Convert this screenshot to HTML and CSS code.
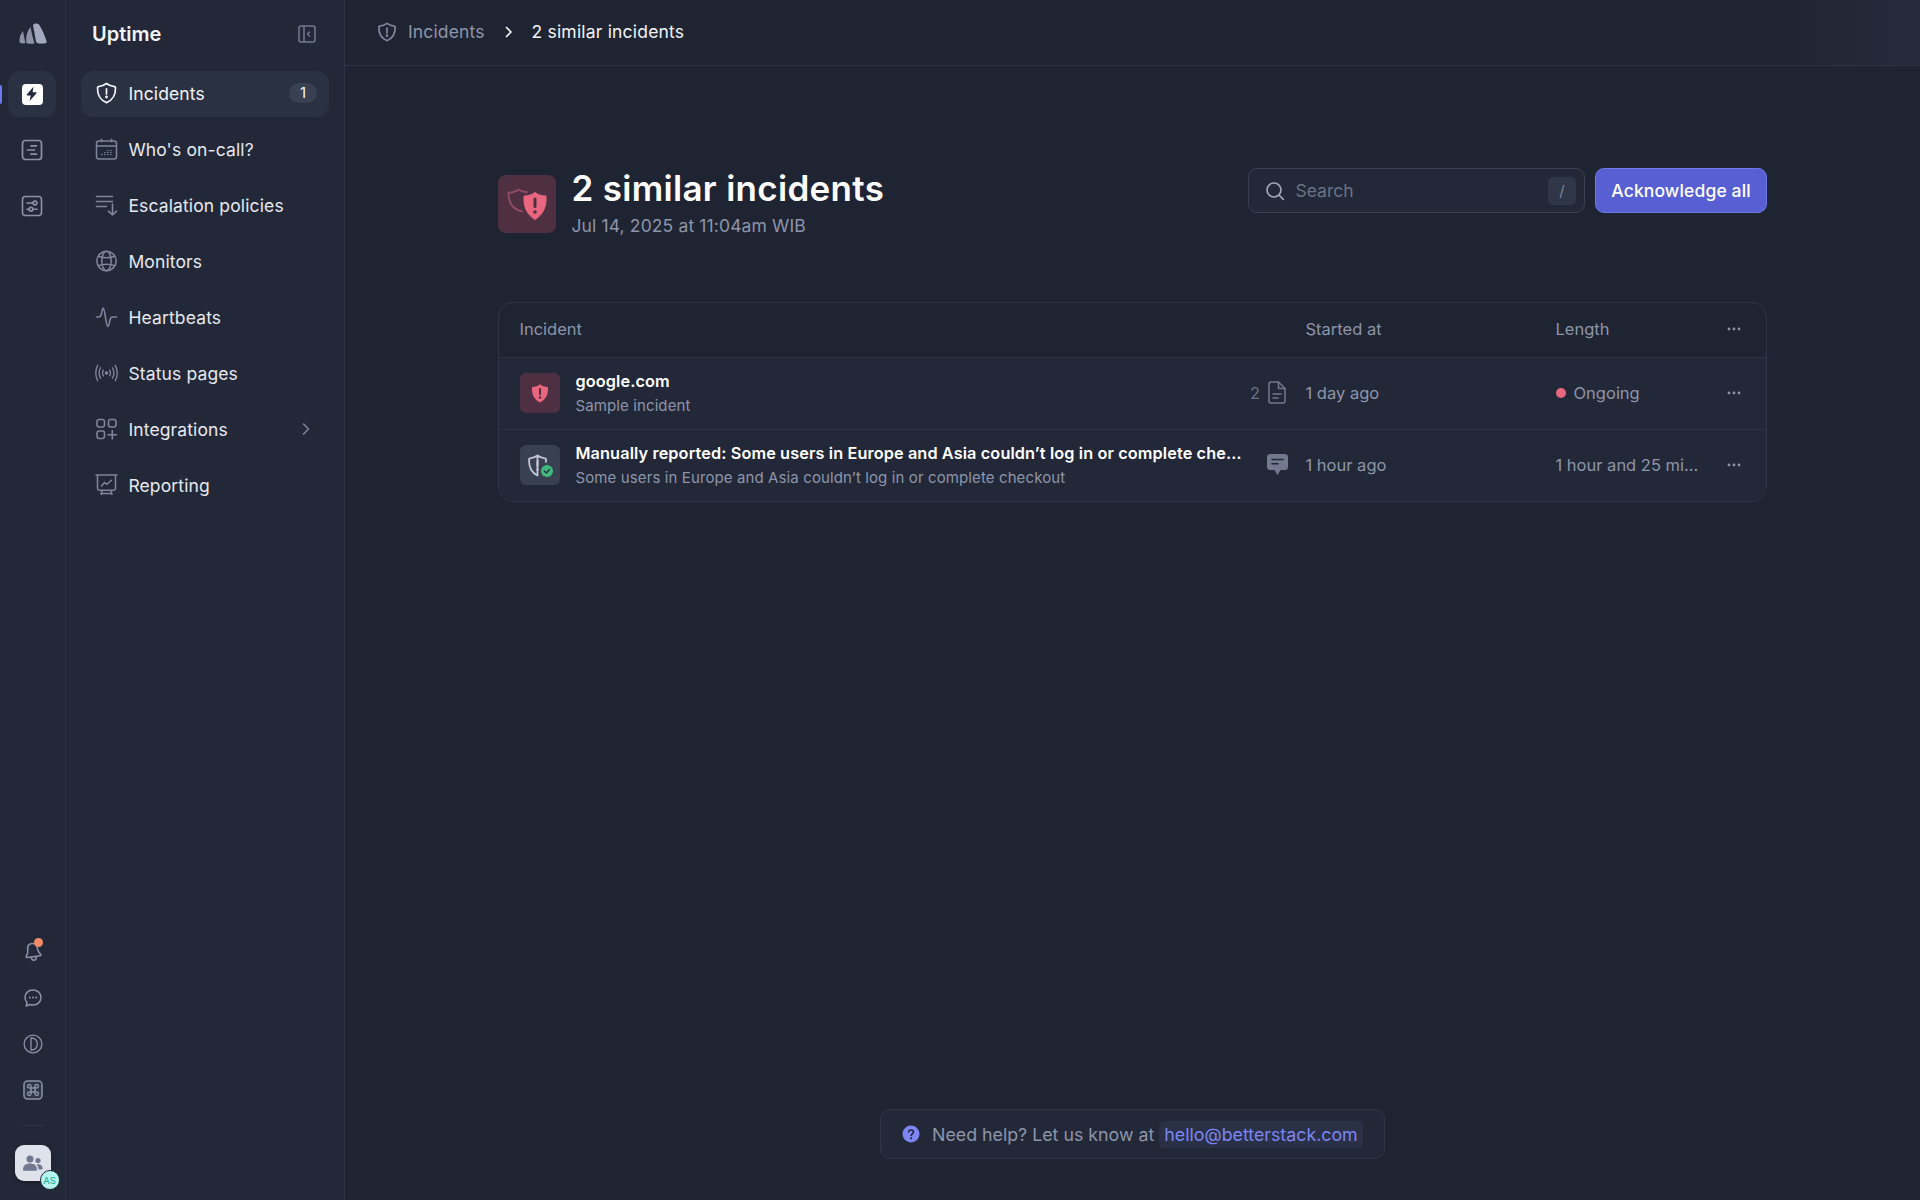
FILE: index.html
```html
<!DOCTYPE html>
<html lang="en">
<head>
<meta charset="utf-8">
<title>2 similar incidents</title>
<link rel="stylesheet" href="styles.css">
</head>
<body>
<div class="app">
  <nav class="rail">
    <div class="rail-logo">
      <svg width="28" height="21" viewBox="0 0 28 21"><path d="M.5 19C0 15 1.500 11 4 8c.5 4 1.500 8 2.500 12-2 .5-5 .8-6-1z" fill="#8b92a8"/><path d="M7.500 20c-1-6 .5-11.500 4-16 1 5.500 2.300 11 4 16.500-2.500.5-6.500.5-8-.5z" fill="#8b92a8"/><path d="M14 2c1.500-1.700 4.500-2 6-.5 3 4.500 6 11.500 7.500 16.500.5 1.500-.5 2.500-2 2.500H20c-1.500 0-2.500-.7-3-2-1-5.500-2-11.500-3-16.500z" fill="#a3aac0"/></svg>
    </div>
    <div class="rail-main">
      <a class="rail-btn rail-active"><span class="rail-marker"></span>
        <span class="tile-white"><svg width="14" height="16" viewBox="0 0 14 16"><path d="M8.500.8 1.800 8.600c-.3.4 0 .9.500.9h3.400L4.600 15l6.900-7.800c.3-.4 0-.9-.5-.9H7.600z" fill="#222839"/></svg></span></a>
      <a class="rail-btn"><svg class="ic" width="22" height="22" viewBox="0 0 22 22" fill="none" stroke="#8b92a8" stroke-width="1.700" stroke-linecap="round"><rect x="1.500" y="1.500" width="19" height="19" rx="3"/><path d="M10 6.800h5.500M6.500 11h7M10 15.200h5.500"/></svg></a>
      <a class="rail-btn"><svg class="ic" width="22" height="22" viewBox="0 0 22 22" fill="none" stroke="#8b92a8" stroke-width="1.600" stroke-linecap="round"><rect x="1.500" y="1.500" width="19" height="19" rx="3"/><path d="M6 8h6M6 14.300h2.500M12.500 14.300H16"/><circle cx="14" cy="8" r="1.900"/><circle cx="10" cy="14.300" r="1.900"/></svg></a>
    </div>
    <div class="rail-bottom">
      <a class="rail-small rail-bell">
        <svg width="20" height="22" viewBox="0 0 20 22" fill="none" stroke="#8b92a8" stroke-width="1.600" stroke-linecap="round" stroke-linejoin="round"><g transform="rotate(-8 10 11)"><path d="M10 2.500c-3 0-4.800 2.200-4.800 5 0 3.300-.7 5-2.400 6.800-.5.600-.2 1.400.6 1.400h13.200c.8 0 1.100-.8.600-1.400-1.700-1.800-2.400-3.500-2.400-6.800 0-2.800-1.800-5-4.800-5z"/><path d="M7.500 16.500c.2 1.700 1.200 2.800 2.500 2.800s2.300-1.100 2.500-2.800"/></g></svg>
        <span class="bell-dot"></span>
      </a>
      <a class="rail-small"><svg width="20" height="20" viewBox="0 0 20 20" fill="none" stroke="#8b92a8" stroke-width="1.500"><path d="M10 2c4.600 0 8 3.200 8 7.500S14.600 17 10 17c-1 0-2-.2-2.900-.5L3.200 18l.8-3.500C2.800 13.200 2 11.400 2 9.500 2 5.200 5.400 2 10 2z" stroke-linejoin="round"/><g fill="#8b92a8" stroke="none"><circle cx="6.800" cy="9.500" r="1"/><circle cx="10" cy="9.500" r="1"/><circle cx="13.200" cy="9.500" r="1"/></g></svg></a>
      <a class="rail-small"><svg width="20" height="20" viewBox="0 0 20 20" fill="none" stroke="#8b92a8" stroke-width="1.300"><circle cx="10" cy="10" r="8.900"/><path d="M8 4c4-.2 6.300 2.300 6.300 6S12 16.200 8 16z"/></svg></a>
      <a class="rail-small"><svg width="20" height="20" viewBox="0 0 20 20" fill="none" stroke="#8b92a8" stroke-width="1.500"><rect x="1" y="1" width="18" height="18" rx="3.500" fill="#2f3647"/><path d="M8 8V6.200A1.700 1.700 0 1 0 6.300 8H13.700A1.700 1.700 0 1 0 12 6.200V13.800A1.700 1.700 0 1 0 13.700 12H6.300A1.700 1.700 0 1 0 8 13.800z"/></svg></a>
      <div class="rail-sep"></div>
      <div class="team">
        <svg width="20" height="16" viewBox="0 0 20 16" fill="#71788f"><circle cx="7" cy="4" r="3.500"/><circle cx="15" cy="5.500" r="2.600"/><path d="M0 14.500C0 10.500 3 8.500 7 8.500s7 2 7 6c0 .8-.6 1.300-1.300 1.300H1.300C.6 15.800 0 15.300 0 14.500z"/><path d="M15 9.200c2.800 0 4.700 1.400 4.700 4.300 0 .7-.5 1.100-1.100 1.100h-3.100c0-2-.6-3.700-1.900-5.200.4-.1.900-.2 1.400-.2z"/></svg>
        <span class="team-badge">AS</span>
      </div>
    </div>
  </nav>

  <aside class="sidebar">
    <div class="side-head">
      <span class="side-title">Uptime</span>
      <svg width="18" height="18" viewBox="0 0 18 18" fill="none" stroke="#727a90" stroke-width="1.500"><rect x="1" y="1" width="16" height="16" rx="2"/><path d="M6 1v16"/><path d="M11.500 7 9.500 9l2 2" stroke-linecap="round" stroke-linejoin="round"/></svg>
    </div>
    <ul class="side-nav">
      <li class="nav-item nav-active">
        <svg class="nav-ic" width="22" height="22" viewBox="0 0 22 22" fill="none" stroke="#f2f4f8" stroke-width="1.700" stroke-linejoin="round"><path d="M11 1.500c2 1.500 5 2.800 8 3.100.6 0 1 .5 1 1 .2 6.500-1.800 12-9 15-7.200-3-9.200-8.500-9-15 0-.5.4-1 1-1 3-.3 6-1.600 8-3.100z"/><path d="M11 6.800v5.200" stroke-linecap="round"/><circle cx="11" cy="15" r=".6" fill="#f2f4f8"/></svg>
        <span class="nav-label">Incidents</span><span class="count">1</span>
      </li>
      <li class="nav-item">
        <svg class="nav-ic" width="22" height="22" viewBox="0 0 22 22" fill="none" stroke="#7e859c" stroke-width="1.500"><rect x="1" y="3" width="20" height="18" rx="2.500"/><path d="M1 8h20M6 .8v3.400M16 .8v3.400"/><path d="M5.500 16.500h1.500M8.500 16.500h1.500M8.500 14.500h1.500M11.500 16.500h1.500M11.500 14.500h1.500M11.500 12.500h1.500M14.500 16.500h1.500M14.500 14.500h1.500M14.500 12.500h1.500" stroke-width="1.200"/></svg>
        <span class="nav-label">Who's on-call?</span>
      </li>
      <li class="nav-item">
        <svg class="nav-ic" width="22" height="22" viewBox="0 0 22 22" fill="none" stroke="#7e859c" stroke-width="1.600" stroke-linecap="round" stroke-linejoin="round"><path d="M1 2.500h16M1 7.500h16M1 12.500h10"/><path d="M17 10v11M13 17.200 17 21l4-3.800"/></svg>
        <span class="nav-label">Escalation policies</span>
      </li>
      <li class="nav-item">
        <svg class="nav-ic" width="22" height="22" viewBox="0 0 22 22" fill="none" stroke="#7e859c" stroke-width="1.500"><circle cx="11" cy="11" r="9.700"/><ellipse cx="11" cy="11" rx="4.700" ry="9.700"/><path d="M2.600 6.300c5 1.800 11.800 1.800 16.800 0M2.600 15.700c5-1.800 11.800-1.800 16.800 0"/></svg>
        <span class="nav-label">Monitors</span>
      </li>
      <li class="nav-item">
        <svg class="nav-ic" width="22" height="22" viewBox="0 0 22 22" fill="none" stroke="#7e859c" stroke-width="1.600" stroke-linecap="round" stroke-linejoin="round"><path d="M1 11h2.500c1.400 0 1.900-1.300 2.400-3 .5-1.700 1-6 1.800-6s1.500 4.500 2.300 9.500c.7 4 1.300 9 2.300 9s1.500-3.500 2.100-6.300c.4-2 1-3.200 2.300-3.200H21"/></svg>
        <span class="nav-label">Heartbeats</span>
      </li>
      <li class="nav-item">
        <svg class="nav-ic" width="24" height="18" viewBox="0 0 24 18" fill="none" stroke="#7e859c" stroke-width="1.400" stroke-linecap="round"><circle cx="12" cy="9" r="1.200" fill="#7e859c"/><path d="M8.700 6c-1 1.800-1 4.200 0 6M15.300 6c1 1.800 1 4.200 0 6M5.800 3.500c-2 3.500-2 7.500 0 11M18.200 3.500c2 3.500 2 7.500 0 11M2.800 1c-2.500 5-2.500 11 0 16M21.200 1c2.500 5 2.500 11 0 16"/></svg>
        <span class="nav-label">Status pages</span>
      </li>
      <li class="nav-item">
        <svg class="nav-ic" width="22" height="22" viewBox="0 0 22 22" fill="none" stroke="#7e859c" stroke-width="1.600" stroke-linecap="round"><rect x="1.500" y="1.500" width="7.500" height="7.500" rx="2.200"/><rect x="13" y="1.500" width="7.500" height="7.500" rx="2.200"/><rect x="1.500" y="13" width="7.500" height="7.500" rx="2.200"/><path d="M16.800 12.500v8.500M12.500 16.800H21"/></svg>
        <span class="nav-label">Integrations</span>
        <svg class="nav-chev" width="8" height="14" viewBox="0 0 8 14" fill="none" stroke="#7e859c" stroke-width="1.600" stroke-linecap="round" stroke-linejoin="round"><path d="m1.500 2 5 5-5 5"/></svg>
      </li>
      <li class="nav-item">
        <svg class="nav-ic" width="23" height="22" viewBox="0 0 23 22" fill="none" stroke="#7e859c" stroke-width="1.500" stroke-linejoin="round"><path d="M.5 1h22"/><path d="M2.500 1v13.500c0 1 .7 1.700 1.700 1.700h14.600c1 0 1.700-.7 1.700-1.700V1"/><path d="m6.500 12 3-3.500 2.500 1.800 4.500-4" stroke-linecap="round"/><path d="M7 16.500 6 21M16 16.500l1 4.500M5.500 19.500h12"/></svg>
        <span class="nav-label">Reporting</span>
      </li>
    </ul>
  </aside>

  <main class="main">
    <header class="crumbs">
      <svg width="20" height="20" viewBox="0 0 22 22" fill="none" stroke="#7e859c" stroke-width="1.900" stroke-linejoin="round"><path d="M11 1.500c2 1.500 5 2.800 8 3.100.6 0 1 .5 1 1 .2 6.500-1.800 12-9 15-7.200-3-9.200-8.500-9-15 0-.5.4-1 1-1 3-.3 6-1.600 8-3.100z"/><path d="M11 6.800v5.200" stroke-linecap="round"/><circle cx="11" cy="15" r=".6" fill="#7e859c"/></svg>
      <span class="crumb-link">Incidents</span>
      <svg class="crumb-sep" width="8" height="12" viewBox="0 0 8 12" fill="none" stroke="#f2f4f8" stroke-width="1.700" stroke-linecap="round" stroke-linejoin="round"><path d="m1.500 1.500 4.500 4.500-4.500 4.500"/></svg>
      <span class="crumb-current">2 similar incidents</span>
    </header>

    <section class="content">
      <div class="page-head">
        <div class="head-icon">
          <svg width="42" height="32" viewBox="0 0 42 32" fill="none"><path d="M12.500 1.500c2.200 1.400 5 2.400 8.500 2.800M16 23.500C7 21 2.200 15 2.500 4.800c4-.2 7.500-1.400 10-3.300" stroke="#8f4d63" stroke-width="2" stroke-linecap="round" stroke-linejoin="round"/><path d="M29 4.500c2.800 2.200 6.200 3.300 11 3.600.5 10.700-2.500 18.200-11 23.400-8.500-5.200-11.500-12.700-11-23.400 4.800-.3 8.200-1.400 11-3.600z" fill="#e8677f" stroke="#e8677f" stroke-linejoin="round"/><path d="M29 11v7.500" stroke="#4f2f42" stroke-width="3" stroke-linecap="round"/><circle cx="29" cy="24" r="1.800" fill="#4f2f42"/></svg>
        </div>
        <div class="head-text">
          <h1 class="title">2 similar incidents</h1>
          <p class="subtitle">Jul 14, 2025 at 11:04am WIB</p>
        </div>
        <div class="head-actions">
          <div class="search">
            <svg width="20" height="20" viewBox="0 0 20 20" fill="none" stroke="#a0a6b8" stroke-width="1.700" stroke-linecap="round"><circle cx="9" cy="9" r="7"/><path d="m14 14 4.300 4.300"/></svg>
            <span class="search-text">Search</span>
            <kbd class="search-key">/</kbd>
          </div>
          <button class="primary" type="button">Acknowledge all</button>
        </div>
      </div>

      <div class="table">
        <div class="row row-head">
          <div class="cell-main">Incident</div>
          <div>Started at</div>
          <div>Length</div>
          <div class="cell-more"><svg class="dots" width="14" height="4" viewBox="0 0 14 4" fill="#8b92a8"><circle cx="2" cy="2" r="1.400"/><circle cx="7" cy="2" r="1.400"/><circle cx="12" cy="2" r="1.400"/></svg></div>
        </div>
        <div class="row row-body">
          <div class="cell-main">
            <div class="row-icon row-icon-red">
              <svg width="20" height="20" viewBox="0 0 22 22"><path d="M11 1.500c2.500 2 5 2.900 8.800 3.100.4 7.700-1.900 13.100-8.800 16.900C4.100 17.700 1.800 12.300 2.200 4.600 6 4.400 8.500 3.500 11 1.500z" fill="#e8677f"/><path d="M11 6.500v6" stroke="#4f2f42" stroke-width="2.200" stroke-linecap="round"/><circle cx="11" cy="16" r="1.400" fill="#4f2f42"/></svg>
            </div>
            <div class="row-text">
              <div class="row-title">google.com</div>
              <div class="row-sub">Sample incident</div>
            </div>
            <div class="row-meta row-meta-doc">
              <span class="meta-num">2</span>
              <svg width="18" height="23" viewBox="0 0 18 23" fill="none" stroke="#71788f" stroke-width="1.500" stroke-linejoin="round"><path d="M3 1h7.500L17 7.500V20c0 1.200-.8 2-2 2H3c-1.200 0-2-.8-2-2V3c0-1.200.8-2 2-2z"/><path d="M10.500 1v6.500H17M5 13h8M5 17h5" stroke-linecap="round"/></svg>
            </div>
          </div>
          <div>1 day ago</div>
          <div class="status"><span class="status-dot"></span>Ongoing</div>
          <div class="cell-more"><svg class="dots" width="14" height="4" viewBox="0 0 14 4" fill="#8b92a8"><circle cx="2" cy="2" r="1.400"/><circle cx="7" cy="2" r="1.400"/><circle cx="12" cy="2" r="1.400"/></svg></div>
        </div>
        <div class="row row-body">
          <div class="cell-main">
            <div class="row-icon row-icon-grey">
              <svg width="28" height="26" viewBox="0 0 28 26" fill="none"><path d="M11.500 3.500c2.300 1.700 4.700 2.600 7.500 2.800.6 0 1 .4 1 1 0 .8 0 1.700-.1 2.500M11.500 23.500C5 20.500 2.800 15 3 7.300c0-.6.400-1 1-1 2.800-.2 5.200-1.100 7.500-2.800z" stroke="#c3c8d6" stroke-width="1.800" stroke-linecap="round" stroke-linejoin="round"/><path d="M11.500 9v5" stroke="#c3c8d6" stroke-width="2" stroke-linecap="round"/><circle cx="11.500" cy="17.500" r="1.200" fill="#c3c8d6"/><circle cx="21" cy="19" r="6" fill="#3fb97c"/><path d="m18.300 19 2 2 3.300-3.500" stroke="#2c3342" stroke-width="1.500" stroke-linecap="round" stroke-linejoin="round"/></svg>
            </div>
            <div class="row-text">
              <div class="row-title">Manually reported: Some users in Europe and Asia couldn’t log in or complete checkout</div>
              <div class="row-sub">Some users in Europe and Asia couldn’t log in or complete checkout</div>
            </div>
            <div class="row-meta">
              <svg width="23" height="23" viewBox="0 0 23 23"><path d="M4 1h15c1.700 0 3 1.300 3 3v10c0 1.700-1.300 3-3 3h-4.500l-3 5-3-5H4c-1.700 0-3-1.300-3-3V4c0-1.700 1.300-3 3-3z" fill="#71788f"/><path d="M6 6.500h11M6 10.800h6" stroke="#222839" stroke-width="1.600" stroke-linecap="round"/></svg>
            </div>
          </div>
          <div>1 hour ago</div>
          <div class="ellipsis">1 hour and 25 minutes</div>
          <div class="cell-more"><svg class="dots" width="14" height="4" viewBox="0 0 14 4" fill="#8b92a8"><circle cx="2" cy="2" r="1.400"/><circle cx="7" cy="2" r="1.400"/><circle cx="12" cy="2" r="1.400"/></svg></div>
        </div>
      </div>
    </section>

    <footer class="help">
      <div class="help-box">
        <svg width="18" height="18" viewBox="0 0 18 18"><circle cx="9" cy="9" r="8.500" fill="#7d86f3"/><path d="M6.600 7c.2-1.300 1.200-2 2.500-2 1.400 0 2.400.8 2.400 2 0 1.800-2.400 1.800-2.400 3.600" fill="none" stroke="#1f2433" stroke-width="1.500" stroke-linecap="round"/><circle cx="9.100" cy="13.200" r="1" fill="#1f2433"/></svg>
        <span class="help-text">Need help? Let us know at</span>
        <a class="help-link">hello@betterstack.com</a>
      </div>
    </footer>
  </main>
</div>
</body>
</html>
```
FILE: styles.css
```css
* { box-sizing: border-box; }
html, body { margin: 0; height: 100%; }
body {
  background: #1f2432;
  color: #f2f4f8;
  font-family: Inter, "Liberation Sans", sans-serif;
  font-size: 17.5px;
  letter-spacing: .0075em;
}
svg { display: block; flex: none; }
ul { list-style: none; margin: 0; padding: 0; }
h1, p { margin: 0; }

.app { display: flex; height: 1200px; overflow: hidden; }

/* icon rail */
.rail {
  width: 66px;
  flex: none;
  background: #222838;
  border-right: 1px solid #2c3344;
  display: flex;
  flex-direction: column;
  align-items: center;
}
.rail-logo { height: 66px; display: flex; align-items: center; justify-content: center; }
.rail-main { margin: 5px 1px 0 0; display: flex; flex-direction: column; gap: 10px; }
.rail-btn {
  width: 48px;
  height: 46px;
  border-radius: 12px;
  display: flex;
  align-items: center;
  justify-content: center;
  position: relative;
}
.rail-active { background: #2a3142; }
.rail-marker {
  position: absolute;
  left: -8px;
  top: 14px;
  width: 2px;
  height: 19px;
  background: #6f78f0;
  border-radius: 0 2px 2px 0;
}
.tile-white {
  width: 21px;
  height: 21px;
  background: #fff;
  border-radius: 4px;
  display: flex;
  align-items: center;
  justify-content: center;
}
.rail-bottom { margin-top: auto; display: flex; flex-direction: column; align-items: center; padding-bottom: 19px; }
.rail-small { width: 46px; height: 46px; display: flex; align-items: center; justify-content: center; position: relative; }
.bell-dot {
  position: absolute;
  top: 9px;
  right: 13px;
  width: 9px;
  height: 9px;
  border-radius: 50%;
  background: #f58a68;
}
.rail-sep { width: 24px; height: 1px; background: #2c3344; margin: 12px 0 19px; }
.team {
  width: 36px;
  height: 36px;
  background: #dfe2ea;
  border-radius: 9px;
  display: flex;
  align-items: center;
  justify-content: center;
  position: relative;
  box-shadow: 0 2px 4px rgba(0,0,0,.3);
}
.team-badge {
  position: absolute;
  right: -9px;
  bottom: -9px;
  width: 20px;
  height: 20px;
  border-radius: 50%;
  background: #b5f5ee;
  border: 1px solid #222838;
  color: #14a594;
  font-size: 9.5px;
  letter-spacing: 0;
  display: flex;
  align-items: center;
  justify-content: center;
}

/* sidebar */
.sidebar {
  width: 279px;
  flex: none;
  background: #222838;
  border-right: 1px solid #2c3344;
  padding: 0 15px;
}
.side-head {
  height: 71px;
  padding: 0 13px 3px 11px;
  display: flex;
  align-items: center;
  justify-content: space-between;
}
.side-title { font-size: 20px; font-weight: 600; letter-spacing: 0; }
.side-nav { display: flex; flex-direction: column; gap: 10px; }
.nav-item {
  height: 46px;
  border-radius: 12px;
  padding: 0 12px 2px 14px;
  display: flex;
  align-items: center;
  color: #e6e9f0;
}
.nav-active { background: #2a3142; color: #f2f4f8; }
.nav-ic { width: 23px; margin-right: 10.4px; }
.nav-label { flex: 1; }
.count {
  width: 28px;
  height: 20px;
  border-radius: 10px;
  background: #394051;
  font-size: 15px;
  text-align: center;
  line-height: 20px;
  letter-spacing: 0;
}
.nav-chev { margin-right: 7px; }

/* main */
.main { flex: 1; min-width: 0; display: flex; flex-direction: column; }
.crumbs {
  height: 66px;
  flex: none;
  border-bottom: 1px solid #2c3344;
  padding: 0 0 2px 32px;
  display: flex;
  align-items: center;
  background: linear-gradient(90deg, transparent 90%, #262b3b 100%);
}
.crumb-link { color: #8e95aa; margin-left: 11px; }
.crumb-sep { margin: 0 19px 0 20px; }
.crumb-current { color: #f2f4f8; letter-spacing: .011em; }

.content { width: 1269px; margin: 0 auto; flex: 1; padding-top: 102px; }
.page-head { display: flex; align-items: flex-start; height: 134px; }
.head-icon {
  width: 58px;
  height: 58px;
  margin-top: 7px;
  border-radius: 8px;
  background: #4f2f42;
  display: flex;
  align-items: center;
  justify-content: center;
}
.head-text { margin-left: 15.5px; }
.title { font-size: 35px; font-weight: 600; line-height: 40px; color: #fff; letter-spacing: .3px; }
.subtitle { font-size: 17.5px; line-height: 24px; color: #8e95aa; margin-top: 6px; }
.head-actions { margin-left: auto; display: flex; gap: 10px; }
.search {
  width: 337px;
  height: 45px;
  border: 1px solid #394051;
  border-radius: 9px;
  background: #222838;
  padding: 0 8px 0 16px;
  display: flex;
  align-items: center;
}
.search-text { flex: 1; margin-left: 10.5px; color: #6b7287; letter-spacing: 0; }
.search-key {
  width: 28px;
  height: 28px;
  border-radius: 5px;
  background: #2f3647;
  color: #7e859c;
  font-family: inherit;
  font-size: 15px;
  display: flex;
  align-items: center;
  justify-content: center;
}
.primary {
  height: 45px;
  width: 172px;
  border: 1px solid #7078e8;
  border-radius: 9px;
  background: #585fd2;
  color: #fff;
  font-family: inherit;
  font-size: 17.5px;
  font-weight: 500;
  letter-spacing: .0075em;
  padding: 0;
}

.table { border: 1px solid #2f3647; border-radius: 15px; overflow: hidden; }
.row {
  display: grid;
  grid-template-columns: minmax(0, 1fr) 250px 145px 65.5px;
  align-items: center;
  color: #8e95aa;
  font-size: 16.5px;
  letter-spacing: 0;
}
.row-head { height: 54px; padding: 0 0 2px 20.5px; }
.row-body { height: 72px; padding: 0 0 2px 20.5px; background: #222838; border-top: 1px solid #2c3344; }
.cell-main { display: flex; align-items: center; min-width: 0; padding-right: 16.5px; }
.cell-more { display: flex; justify-content: center; padding-left: 2px; }
.row-icon {
  width: 40px;
  height: 40px;
  flex: none;
  margin-top: 1px;
  border-radius: 6px;
  display: flex;
  align-items: center;
  justify-content: center;
}
.row-icon-red { background: #4f2f42; }
.row-icon-grey { background: #394051; }
.row-text { margin-left: 16px; margin-top: 2px; min-width: 0; flex: 1; }
.row-title {
  color: #fff;
  font-weight: 600;
  font-size: 16.25px;
  letter-spacing: .12px;
  line-height: 24px;
  white-space: nowrap;
  overflow: hidden;
  text-overflow: ellipsis;
}
.row-sub {
  color: #8e95aa;
  font-size: 15px;
  letter-spacing: .11px;
  line-height: 24px;
  margin-top: 1px;
  white-space: nowrap;
}
.row-meta { display: flex; align-items: center; gap: 8px; margin-left: 20px; flex: none; color: #6b7287; }
.row-meta-doc { margin-right: 3px; }
.meta-num { font-size: 16.5px; }
.status { display: flex; align-items: center; }
.status-dot { width: 10px; height: 10px; border-radius: 50%; background: #e8677f; margin-right: 8px; }
.ellipsis { white-space: nowrap; overflow: hidden; text-overflow: ellipsis; }

.help { display: flex; justify-content: center; padding-bottom: 41px; }
.help-box {
  height: 50px;
  width: 505px;
  border: 1px solid #2f3647;
  border-radius: 10px;
  background: #222838;
  padding: 0 21px;
  display: flex;
  align-items: center;
  white-space: nowrap;
}
.help-text { color: #8e95aa; margin-left: 12px; font-size: 17.8px; letter-spacing: 0; }
.help-link {
  margin-left: 5px;
  padding: 0 5px;
  height: 27px;
  line-height: 27px;
  border-radius: 5px;
  background: #2a3046;
  color: #7d86f3;
  font-size: 17.8px;
  letter-spacing: 0;
}
```
